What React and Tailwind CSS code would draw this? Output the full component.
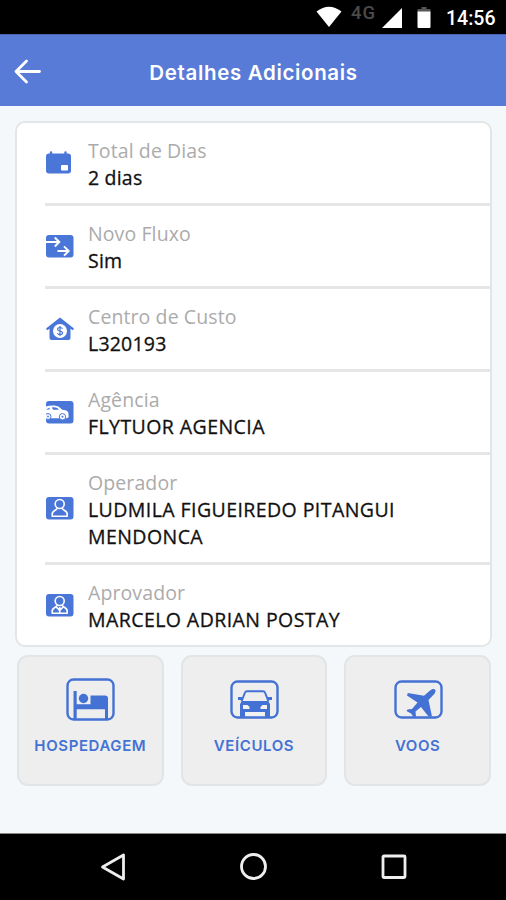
function CalendarIcon() {
  return (
    <svg viewBox="0 0 28 24" className="w-7 h-6">
      <path d="M5 1.5v4M19.500 1.5v4" stroke="#4a76d8" strokeWidth="2.4" strokeLinecap="round" />
      <rect x="0" y="2.500" width="25" height="20" rx="3" fill="#4a76d8" />
      <rect x="15" y="14" width="7" height="5.500" rx="0.8" fill="#fff" />
    </svg>
  );
}

function FlowIcon() {
  return (
    <svg viewBox="0 0 28 24" className="w-7 h-6">
      <rect x="0" y="1" width="27.500" height="22.500" rx="3" fill="#4a76d8" />
      <path
        d="M0 8h13M8.800 3.500l4.500 4.500-4.500 4.500M11.500 17h11M18 12.300l4.700 4.700-4.700 4.700"
        fill="none"
        stroke="#fff"
        strokeWidth="1.900"
      />
    </svg>
  );
}

function HouseIcon() {
  return (
    <svg viewBox="0 0 28 24" className="w-7 h-6">
      <path
        d="M14 0.500 28 11.500l-1.200 1.700-2.300-1.400V21a2 2 0 0 1-2 2h-17a2 2 0 0 1-2-2v-9.200l-2.300 1.400L0 11.500z"
        fill="#4a76d8"
      />
      <circle cx="14" cy="14" r="7" fill="#fff" />
      <path
        d="M16.500 11.800c-.5-1-1.400-1.300-2.500-1.300-1.500 0-2.400.7-2.400 1.800 0 2.500 5 1 5 3.500 0 1.100-1 1.800-2.500 1.800-1.200 0-2.200-.4-2.700-1.400M14 9v10"
        fill="none"
        stroke="#4a76d8"
        strokeWidth="1.200"
      />
    </svg>
  );
}

function AgencyIcon() {
  return (
    <svg viewBox="0 0 28 24" className="w-7 h-6">
      <rect x="0" y="1" width="27.500" height="22.500" rx="3" fill="#4a76d8" />
      <path
        d="M0 6.500C4 5 9.500 5 12.500 6.500l3.800 3.300c3 .2 5.200 1 6 2.700l.4 4.800-2.200 1H0z"
        fill="#fff"
      />
      <path d="M0 9.500h3.500V7.600M6 7.300c2-.2 3.800 0 5.200.7l1.700 1.700-6 .1z" fill="#4a76d8" />
      <circle cx="2" cy="16.500" r="3" fill="#fff" stroke="#4a76d8" strokeWidth="1" />
      <circle cx="16.500" cy="16.800" r="3.200" fill="#fff" stroke="#4a76d8" strokeWidth="1" />
      <circle cx="16.500" cy="16.800" r="1" fill="#4a76d8" />
      <circle cx="2" cy="16.500" r="0.900" fill="#4a76d8" />
    </svg>
  );
}

function PersonIcon({ tie }) {
  return (
    <svg viewBox="0 0 28 24" className="w-7 h-6">
      <rect x="0" y="1" width="27.500" height="22.500" rx="3" fill="#4a76d8" />
      <g fill="none" stroke="#fff" strokeWidth="1.600" strokeLinejoin="round">
        <circle cx="13.700" cy="8" r="4.500" />
        <path d="M11 12.200c0 2.300-4.800 1.800-4.800 6v2h15v-2c0-4.200-4.800-3.700-4.800-6" />
        {tie && <path d="M10.200 14l3.500 3.300 3.500-3.300M13.700 14v6" />}
      </g>
    </svg>
  );
}

function BedIcon() {
  return (
    <svg viewBox="0 0 49 43" className="w-[49px] h-[43px]">
      <rect x="1.500" y="1.500" width="46" height="40" rx="6" fill="none" stroke="#4472d4" strokeWidth="2.400" />
      <path d="M7.500 13h3.200v13.300h13.800V17.500h14.500a3 3 0 0 1 3 3V41h-3V31.300H10.700V41H7.500z" fill="#4472d4" />
      <circle cx="17.500" cy="20.500" r="4.700" fill="#4472d4" />
    </svg>
  );
}

function CarIcon() {
  return (
    <svg viewBox="0 0 49 39" className="w-[49px] h-[39px]">
      <rect x="1.500" y="1.500" width="46" height="36" rx="6" fill="none" stroke="#4472d4" strokeWidth="2.400" />
      <path
        d="M11.500 21.500l3.500-9c.3-.9 1-1.300 2-1.300h16c1 0 1.700.4 2 1.300l3.500 9"
        fill="none"
        stroke="#4472d4"
        strokeWidth="2"
      />
      <path d="M8 18.500h4M38 18.500h4" stroke="#4472d4" strokeWidth="3" />
      <path d="M12 21h26l2 3v13h-5v-5H15v5H10V24z" fill="#4472d4" />
      <path d="M13 25h4.500l2 2v2H13zM37 25h-4.500l-2 2v2H37zM15.500 32.500h19v3h-19z" fill="#f2f2f2" />
    </svg>
  );
}

function PlaneIcon() {
  return (
    <svg viewBox="0 0 49 39" className="w-[49px] h-[39px]">
      <rect x="1.500" y="1.500" width="46" height="36" rx="6" fill="none" stroke="#4472d4" strokeWidth="2.400" />
      <path
        d="M36 10.500c1.500-1.500 4-2 5-1s.4 3.300-1 4.700L34.500 20 38 36.500h-3.500L27 27l-5.500 4.500.5 5.500h-2.500L17 33.500 12.500 31l1-1.600 4.500-.4 5.500-6.500L13 15.500l.8-2.500L30 15.800z"
        fill="#4472d4"
      />
    </svg>
  );
}

const details = [
  { label: "Total de Dias", value: "2 dias", icon: <CalendarIcon /> },
  { label: "Novo Fluxo", value: "Sim", icon: <FlowIcon /> },
  { label: "Centro de Custo", value: "L320193", icon: <HouseIcon /> },
  { label: "Agência", value: "FLYTUOR AGENCIA", icon: <AgencyIcon />, wide: true },
  { label: "Operador", value: "LUDMILA FIGUEIREDO PITANGUI MENDONCA", icon: <PersonIcon />, wide: true },
  { label: "Aprovador", value: "MARCELO ADRIAN POSTAY", icon: <PersonIcon tie />, wide: true },
];

const services = [
  { name: "HOSPEDAGEM", icon: <BedIcon /> },
  { name: "VEÍCULOS", icon: <CarIcon /> },
  { name: "VOOS", icon: <PlaneIcon /> },
];

export default function App() {
  return (
    <div className="w-[506px] h-[900px] flex flex-col overflow-hidden bg-[#f4f8fa] font-['Open_Sans',sans-serif]">
      {/* Status bar */}
      <div className="h-[34px] shrink-0 bg-black flex items-center justify-end pr-[11px]">
        <svg viewBox="0 0 120 34" className="w-[120px] h-[34px]">
          <path d="M0.500 11.500Q13 2 25.500 11.500L13 27z" fill="#fff" />
          <path d="M86 8v20H66z" fill="#fff" />
          <path d="M105.500 7h5v2h4v3h-13V9h4z" fill="#555" />
          <path d="M101.500 11.500h13V27a1 1 0 0 1-1 1h-11a1 1 0 0 1-1-1z" fill="#fff" />
          <text x="35" y="19" fill="#4b4b4b" fontSize="18.500" fontWeight="500" fontFamily="Roboto, sans-serif" textLength="24">
            4G
          </text>
        </svg>
        <span className="ml-[10px] pt-[3px] w-[49px] whitespace-nowrap text-[19.500px] font-medium text-white font-['Roboto',sans-serif]">
          14:56
        </span>
      </div>

      {/* Header */}
      <div className="h-[72px] shrink-0 bg-[#587bd8] border-t border-[#4865b2] flex items-center px-[14px]">
        <svg viewBox="0 0 28 26" className="w-7 h-[26px] shrink-0">
          <path
            d="M25.500 13.500H2M12.500 3L2 13.500l10.500 10.500"
            fill="none"
            stroke="#fff"
            strokeWidth="2.800"
            strokeLinecap="round"
            strokeLinejoin="round"
          />
        </svg>
        <h1 className="flex-1 text-center pt-[5px] pr-[27px] text-[20.500px] tracking-[0.65px] font-semibold text-white font-['Inter',sans-serif]">
          Detalhes Adicionais
        </h1>
      </div>

      {/* Details card */}
      <div className="mt-[15px] ml-[15px] mr-[14px] shrink-0 bg-white border-2 border-[#e3e6e6] rounded-[10px] pl-7">
        {details.map((item) => (
          <div
            key={item.label}
            className="flex items-center pt-[14px] pb-3 border-b-[3px] border-[#e6e6e6] last:border-b-0"
          >
            <div className="w-[43px] shrink-0 pl-px pb-[3px]">{item.icon}</div>
            <div className="w-[340px] leading-[27px]">
              <p className="text-[19.500px] tracking-[0.1px] text-[#ababab]">{item.label}</p>
              <p
                className={`text-[19.500px] text-[#111] [-webkit-text-stroke:0.3px_#111] ${
                  item.wide ? "tracking-[0.43px]" : "tracking-[0.2px]"
                }`}
              >
                {item.value}
              </p>
            </div>
          </div>
        ))}
      </div>

      {/* Services */}
      <div className="mt-2 ml-[17px] mr-[15px] grid grid-cols-3 gap-[17px] shrink-0">
        {services.map((service) => (
          <button
            key={service.name}
            className="h-[131px] flex flex-col items-center bg-[#eee] border-2 border-[#e2e5e6] rounded-[11px] pt-[21px]"
          >
            <span className="h-[43px] pl-px flex items-center">{service.icon}</span>
            <span className="mt-[15px] text-[15px] leading-[20px] tracking-[0.6px] font-semibold text-[#4472d4] font-['Inter',sans-serif]">
              {service.name}
            </span>
          </button>
        ))}
      </div>

      {/* Navigation bar */}
      <div className="mt-auto h-[67px] shrink-0 bg-black border-t border-[#888] flex items-center justify-between pl-[100px] pr-[98px]">
        <svg viewBox="0 0 28 28" className="w-7 h-7">
          <path d="M23.500 2v24L2.500 14z" fill="none" stroke="#eee" strokeWidth="2.800" strokeLinejoin="round" />
        </svg>
        <svg viewBox="0 0 28 28" className="w-7 h-7">
          <circle cx="13.500" cy="13.500" r="12" fill="none" stroke="#eee" strokeWidth="2.800" />
        </svg>
        <svg viewBox="0 0 28 28" className="w-7 h-7">
          <rect x="3" y="3" width="22" height="21.500" rx="1" fill="none" stroke="#eee" strokeWidth="2.800" />
        </svg>
      </div>
    </div>
  );
}
